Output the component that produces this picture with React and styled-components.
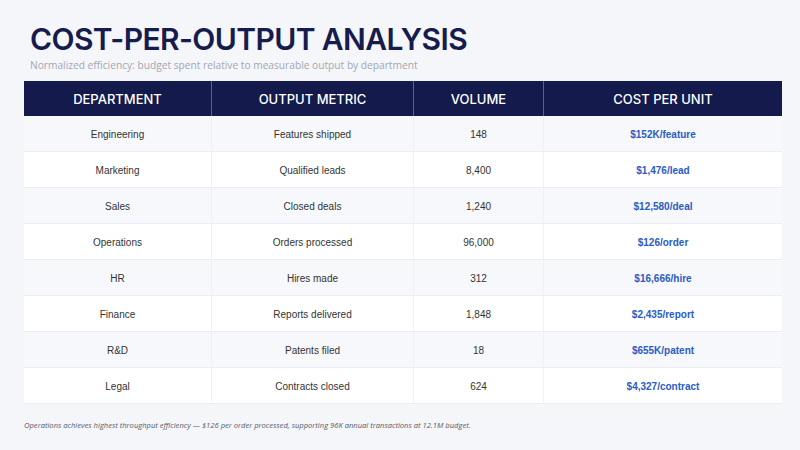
import React from "react";
import styled, { createGlobalStyle } from "styled-components";

const GlobalStyle = createGlobalStyle`
  html, body {
    margin: 0;
    padding: 0;
    background: #f5f6fa;
  }
`;

const Slide = styled.div`
  width: 800px;
  height: 450px;
  box-sizing: border-box;
  padding: 21px 18px 0 24px;
  background: #f5f6fa;
  display: flex;
  flex-direction: column;
  overflow: hidden;
`;

const Title = styled.h1`
  margin: 0 0 0 6px;
  font-family: Inter, "Liberation Sans", sans-serif;
  font-size: 30px;
  font-weight: 600;
  line-height: 36px;
  letter-spacing: -0.6px;
  color: #161c4d;
`;

const Subtitle = styled.p`
  margin: 1px 0 0 6px;
  font-family: "Open Sans", "Liberation Sans", sans-serif;
  font-size: 10.2px;
  line-height: 14px;
  color: #a3a6b0;
`;

const Table = styled.div`
  margin-top: 9px;
  width: 758px;
  display: grid;
  grid-template-columns: 187px 202px 130px 239px;
`;

const HeadCell = styled.div`
  height: 35px;
  display: flex;
  align-items: center;
  justify-content: center;
  background: #141a4b;
  color: #fff;
  font-family: Inter, "Liberation Sans", sans-serif;
  font-size: 13px;
  font-weight: 500;
  border-left: ${p => (p.$first ? "none" : "1px solid #5b6088")};
`;

const Cell = styled.div`
  height: 33px;
  padding-top: 2px;
  display: flex;
  align-items: center;
  justify-content: center;
  background: ${p => (p.$alt ? "#f7f8fb" : "#ffffff")};
  border-bottom: 1px solid #ecedf2;
  border-left: ${p => (p.$first ? "none" : "1px solid #f0f1f5")};
  font-family: "Liberation Sans", Arial, sans-serif;
  font-size: 10px;
  color: ${p => (p.$cost ? "#2a5bc6" : "#333")};
  font-weight: ${p => (p.$cost ? 700 : 400)};
`;

const Note = styled.p`
  margin: 16px 0 0 0;
  font-family: "Open Sans", "Liberation Sans", sans-serif;
  font-style: italic;
  font-size: 7.6px;
  color: #555a6a;
`;

const rows = [
  ["Engineering", "Features shipped", "148", "$152K/feature"],
  ["Marketing", "Qualified leads", "8,400", "$1,476/lead"],
  ["Sales", "Closed deals", "1,240", "$12,580/deal"],
  ["Operations", "Orders processed", "96,000", "$126/order"],
  ["HR", "Hires made", "312", "$16,666/hire"],
  ["Finance", "Reports delivered", "1,848", "$2,435/report"],
  ["R&D", "Patents filed", "18", "$655K/patent"],
  ["Legal", "Contracts closed", "624", "$4,327/contract"],
];

const heads = ["DEPARTMENT", "OUTPUT METRIC", "VOLUME", "COST PER UNIT"];

export default function App() {
  return (
    <>
      <GlobalStyle />
      <Slide>
        <Title>COST-PER-OUTPUT ANALYSIS</Title>
        <Subtitle>Normalized efficiency: budget spent relative to measurable output by department</Subtitle>
        <Table>
          {heads.map((h, i) => (
            <HeadCell key={h} $first={i === 0}>{h}</HeadCell>
          ))}
          {rows.map((r, ri) =>
            r.map((c, ci) => (
              <Cell key={ri + "-" + ci} $alt={ri % 2 === 0} $first={ci === 0} $cost={ci === 3}>
                {c}
              </Cell>
            ))
          )}
        </Table>
        <Note>
          Operations achieves highest throughput efficiency — $126 per order processed, supporting 96K annual transactions at 12.1M budget.
        </Note>
      </Slide>
    </>
  );
}
